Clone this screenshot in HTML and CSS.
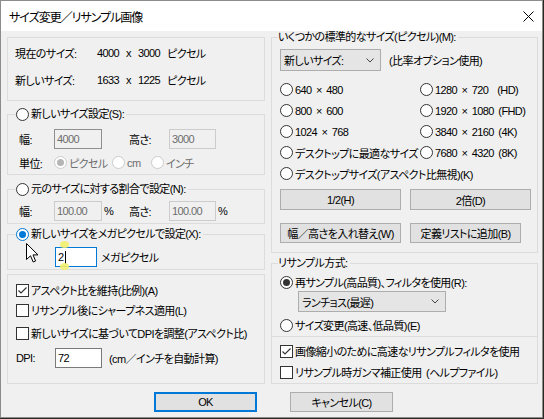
FILE: index.html
```html
<!DOCTYPE html>
<html lang="ja">
<head>
<meta charset="utf-8">
<title>サイズ変更／リサンプル画像</title>
<link rel="stylesheet" href="styles.css">
</head>
<body>
<div class="window">
  <div class="titlebar">
    <span class="title">サイズ変更／リサンプル画像</span>
    <svg class="close" width="11" height="11" viewBox="0 0 11 11"><path d="M0.5 0.5L10.5 10.5M10.5 0.5L0.5 10.5" stroke="#000" stroke-width="1" fill="none"/></svg>
  </div>
  <div class="content">
    <div class="columns">
      <div class="col">
        <div class="box info">
          <div class="info-row"><span class="info-label">現在のサイズ:</span><span class="val">4000</span><span class="val">x</span><span class="val">3000</span><span class="val">ピクセル</span></div>
          <div class="info-row"><span class="info-label">新しいサイズ:</span><span class="val">1633</span><span class="val">x</span><span class="val">1225</span><span class="val">ピクセル</span></div>
        </div>

        <fieldset class="group g-size">
          <legend class="lg-left"><span class="radio"></span>新しいサイズ設定(S):</legend>
          <div class="fs-body">
            <div class="dim-row">
              <span class="lbl w35">幅:</span><span class="input dis dark w48">4000</span><span class="unit"></span>
              <span class="lbl w40">高さ:</span><span class="input dis w47">3000</span>
            </div>
            <div class="unit-row">
              <span class="lbl w35">単位:</span>
              <span class="ritem dis w58"><span class="radio dis on"></span>ピクセル</span>
              <span class="ritem dis w39"><span class="radio dis"></span>cm</span>
              <span class="ritem dis"><span class="radio dis"></span>インチ</span>
            </div>
          </div>
        </fieldset>

        <fieldset class="group g-pct">
          <legend class="lg-left"><span class="radio"></span>元のサイズに対する割合で設定(N):</legend>
          <div class="fs-body">
            <div class="dim-row">
              <span class="lbl w35">幅:</span><span class="input dis w48">100.00</span><span class="unit">%</span>
              <span class="lbl w40">高さ:</span><span class="input dis w47">100.00</span><span class="unit">%</span>
            </div>
          </div>
        </fieldset>

        <fieldset class="group g-mp">
          <legend class="lg-left"><span class="radio blue on"></span>新しいサイズをメガピクセルで設定(X):</legend>
          <div class="fs-body">
            <div class="mp-row">
              <span class="input focus w42">2<span class="caret"></span></span><span class="mp-note">メガピクセル</span>
            </div>
          </div>
        </fieldset>

        <div class="box opts">
          <div class="crow r1"><span class="check"><svg width="11" height="11" viewBox="0 0 11 11"><path d="M1.5 5.5L4 8L9.5 2.5" stroke="#333" stroke-width="1.2" fill="none"/></svg></span>アスペクト比を維持(比例)(A)</div>
          <div class="crow r2"><span class="check"></span>リサンプル後にシャープネス適用(L)</div>
          <div class="crow r3"><span class="check"></span>新しいサイズに基づいてDPIを調整(アスペクト比)</div>
          <div class="dpi-row"><span class="lbl w39">DPI:</span><span class="input w47">72</span><span class="dpi-note">(cm／インチを自動計算)</span></div>
        </div>
      </div>

      <div class="col">
        <fieldset class="group g-std">
          <legend class="lg-right">いくつかの標準的なサイズ(ピクセル)(M):</legend>
          <div class="fs-body">
            <div class="combo-row">
              <span class="combo w101">新しいサイズ:<svg class="chev" width="8" height="5" viewBox="0 0 8 5"><path d="M0.5 0.5L4 4L7.5 0.5" stroke="#444" stroke-width="1" fill="none"/></svg></span>
              <span class="combo-note">(比率オプション使用)</span>
            </div>
            <div class="rgrid">
              <span class="ritem"><span class="radio"></span>640 × 480</span>
              <span class="ritem"><span class="radio"></span>1280 × 720&nbsp;&nbsp;(HD)</span>
              <span class="ritem"><span class="radio"></span>800 × 600</span>
              <span class="ritem"><span class="radio"></span>1920 × 1080 (FHD)</span>
              <span class="ritem"><span class="radio"></span>1024 × 768</span>
              <span class="ritem"><span class="radio"></span>3840 × 2160 (4K)</span>
              <span class="ritem"><span class="radio"></span>デスクトップに最適なサイズ</span>
              <span class="ritem"><span class="radio"></span>7680 × 4320 (8K)</span>
              <span class="ritem span2"><span class="radio"></span>デスクトップサイズ(アスペクト比無視)(K)</span>
            </div>
            <div class="btn-row b1">
              <span class="btn w121">1/2(H)</span>
              <span class="btn w121">2倍(D)</span>
            </div>
            <div class="btn-row b2">
              <span class="btn w121 h20">幅／高さを入れ替え(W)</span>
              <span class="btn w111 h20">定義リストに追加(B)</span>
            </div>
          </div>
        </fieldset>

        <fieldset class="group g-res">
          <legend class="lg-right">リサンプル方式:</legend>
          <div class="fs-body">
            <div class="crow"><span class="radio on"></span>再サンプル(高品質)、フィルタを使用(R):</div>
            <div class="combo lanczos">ランチョス(最遅)<svg class="chev" width="8" height="5" viewBox="0 0 8 5"><path d="M0.5 0.5L4 4L7.5 0.5" stroke="#444" stroke-width="1" fill="none"/></svg></div>
            <div class="crow last"><span class="radio"></span>サイズ変更(高速、低品質)(E)</div>
          </div>
        </fieldset>

        <div class="box filt">
          <div class="crow"><span class="check"><svg width="11" height="11" viewBox="0 0 11 11"><path d="M1.5 5.5L4 8L9.5 2.5" stroke="#333" stroke-width="1.2" fill="none"/></svg></span>画像縮小のために高速なリサンプルフィルタを使用</div>
          <div class="crow second"><span class="check"></span>リサンプル時ガンマ補正使用 (ヘルプファイル)</div>
        </div>
      </div>
    </div>

    <div class="footer">
      <span class="btn default w103">OK</span>
      <span class="btn w103">キャンセル(C)</span>
    </div>
  </div>

  <span class="blob blob-top"></span>
  <span class="blob blob-bottom"></span>
  <svg class="cursor" width="13" height="20" viewBox="0 0 13 20"><path d="M0.5 0.5L0.5 16.5L4.5 12.8L7.2 19L9.6 18L7 11.9L12 11.9Z" fill="#fff" stroke="#000" stroke-width="1" stroke-linejoin="round"/></svg>
</div>
</body>
</html>
```
FILE: styles.css
```css
* { box-sizing: border-box; }

html, body {
  margin: 0;
  padding: 0;
}

body {
  width: 544px;
  height: 419px;
  overflow: hidden;
  background: #2b2824;
  font-family: "Liberation Sans", "Noto Sans CJK JP", sans-serif;
  font-size: 11px;
  font-feature-settings: "palt" 1;
  letter-spacing: -0.6px;
  word-spacing: 2px;
  color: #000;
  white-space: nowrap;
}

.window {
  position: relative;
  width: 543px;
  height: 418px;
  border: 1px solid #8c8c8c;
  background: #f0f0f0;
  display: flex;
  flex-direction: column;
}

.titlebar {
  flex: none;
  height: 30px;
  background: #fff;
  display: flex;
  align-items: center;
  padding-left: 8px;
}

.title {
  font-size: 12px;
  letter-spacing: -1px;
}

.close {
  margin-left: auto;
  margin-right: 8px;
}

.content {
  padding: 0 4px 0 6px;
}

.columns {
  display: grid;
  grid-template-columns: 258px 267px;
  column-gap: 6px;
}

.col {
  display: flex;
  flex-direction: column;
}

.box { border: 1px solid #dcdcdc; }

/* info box */
.info {
  margin-top: 6px;
  height: 64px;
  padding: 5px 0 0 7px;
  display: flex;
  flex-direction: column;
  gap: 7px;
}
.info-row {
  height: 20px;
  display: flex;
  align-items: center;
}
.info-label { width: 82px; }
.val + .val { margin-left: 7px; }

/* fieldsets */
fieldset.group {
  margin: 0;
  padding: 0;
  min-width: 0;
  border: 1px solid #dcdcdc;
}
fieldset.group > legend {
  height: 13px;
  line-height: 13px;
  padding: 0 2px 0 0;
  display: flex;
  align-items: center;
}
fieldset.group > .lg-left { margin-left: 8px; }
fieldset.group > .lg-right { margin-left: 6px; }

fieldset.g-size { margin-top: 7px; }
.g-size .fs-body { padding: 8px 0 3px 11px; }
fieldset.g-pct { margin-top: 8px; }
.g-pct .fs-body { padding: 5px 0 2px 11px; }
fieldset.g-mp { margin-top: 4px; }
.g-mp .fs-body { padding: 6px 0 2px 11px; }

.lbl { display: inline-block; flex: none; }
.w35 { width: 35px; }
.w39 { width: 39px; }
.w40 { width: 40px; }
.w42 { width: 42px; }
.w47 { width: 47px; }
.w48 { width: 48px; }
.w58 { width: 58px; }
.w101 { width: 101px; }
.w103 { width: 103px; }
.w111 { width: 111px; }
.w121 { width: 121px; }

.dim-row, .unit-row, .mp-row, .dpi-row, .combo-row, .btn-row, .crow {
  display: flex;
  align-items: center;
}
.dim-row { height: 20px; }
.unit-row { height: 17px; margin-top: 5px; }
.mp-row { height: 20px; padding-left: 36px; }

.unit {
  width: 27px;
  flex: none;
  padding-left: 2px;
}

.input {
  flex: none;
  height: 20px;
  border: 1px solid #7a7a7a;
  background: #fff;
  padding-left: 2px;
  display: flex;
  align-items: center;
}
.input.dis {
  background: #f0f0f0;
  border-color: #cccccc;
  color: #6d6d6d;
}
.input.dis.dark { border-color: #8f8f8f; }
.input.focus { border-color: #0078d7; }
.caret {
  width: 1px;
  height: 13px;
  background: #000;
  margin-left: 1px;
}
.mp-note { margin-left: 4px; }

/* radio / check */
.ritem {
  display: flex;
  align-items: center;
  flex: none;
}
.ritem.dis { color: #6d6d6d; }

.radio {
  flex: none;
  width: 13px;
  height: 13px;
  border: 1px solid #333;
  border-radius: 50%;
  background: #fff;
  margin-right: 2px;
  display: inline-flex;
  align-items: center;
  justify-content: center;
}
.radio.on::after {
  content: "";
  width: 7px;
  height: 7px;
  border-radius: 50%;
  background: #333;
}
.radio.blue { border-color: #0078d7; }
.radio.blue::after { background: #0078d7; }
.radio.dis { border-color: #cccccc; }
.radio.dis.on::after { background: #b5b5b5; }

.check {
  flex: none;
  width: 13px;
  height: 13px;
  border: 1px solid #333;
  background: #fff;
  margin-right: 2px;
  display: inline-flex;
  align-items: center;
  justify-content: center;
}
.check svg { display: block; }

/* options box left */
.box.opts {
  margin-top: 4px;
  padding: 7px 0 15px 8px;
}
.crow { height: 16px; }
.opts .r2 { margin-top: 4px; }
.opts .r3 { margin-top: 7px; }
.dpi-row { height: 20px; margin-top: 7px; }
.dpi-note { margin-left: 7px; }

/* right column */
.g-std .fs-body { padding: 5px 0 9px 8px; }
.combo-row { height: 22px; }
.combo {
  flex: none;
  height: 22px;
  border: 1px solid #adadad;
  background: #e5e5e5;
  display: flex;
  align-items: center;
  padding-left: 3px;
}
.chev {
  margin-left: auto;
  margin-right: 6px;
  display: block;
}
.combo-note { margin-left: 8px; }

.rgrid {
  margin-top: 8px;
  display: grid;
  grid-template-columns: 140px 1fr;
  grid-auto-rows: 21px;
  align-items: center;
}
.span2 { grid-column: 1 / span 2; }

.btn-row { gap: 9px; }
.b1 { margin-top: 5px; }
.b2 { margin-top: 13px; }

.btn {
  flex: none;
  height: 21px;
  border: 1px solid #adadad;
  background: #e1e1e1;
  display: flex;
  align-items: center;
  justify-content: center;
}
.btn.h20 { height: 20px; }

fieldset.g-res { margin-top: 4px; }
.g-res .fs-body { padding: 4px 0 3px 8px; }
.combo.lanczos {
  margin: 1px 0 0 18px;
  width: 148px;
  height: 21px;
}
.g-res .last { margin-top: 5px; }

.box.filt {
  border-top: none;
  padding: 6px 0 3px 8px;
}
.filt .second { margin-top: 5px; }

.footer {
  display: flex;
  gap: 33px;
  margin-top: 8px;
  padding-left: 147px;
}
.footer .btn { height: 20px; }
.footer .btn.default { border: 2px solid #0078d7; }

/* overlays: screen-recording caret marks and mouse pointer */
.blob {
  position: absolute;
  width: 9px;
  height: 7px;
  border-radius: 50%;
  background: #f2ee6e;
  opacity: 0.9;
}
.blob-top { left: 59px; top: 240px; }
.blob-bottom { left: 59px; top: 262px; }

.cursor {
  position: absolute;
  left: 25px;
  top: 242px;
}
```
